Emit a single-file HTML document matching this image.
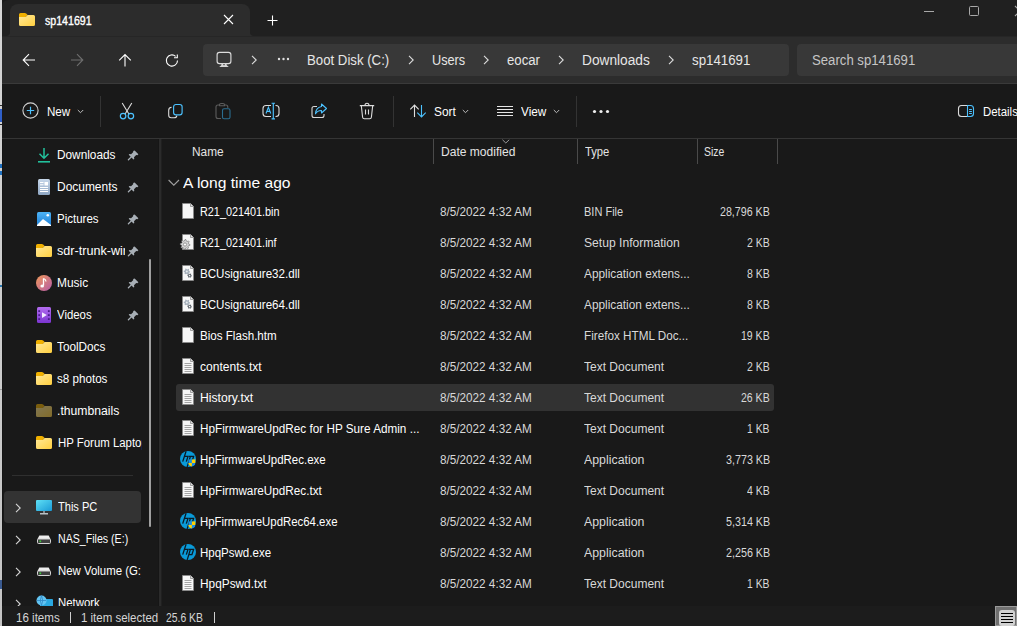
<!DOCTYPE html><html><head><meta charset="utf-8"><style>
html,body{margin:0;padding:0;width:1017px;height:626px;overflow:hidden;background:#191919}
body{position:relative;font-family:"Liberation Sans",sans-serif}
.t{position:absolute;white-space:pre;transform-origin:0 0}
svg{overflow:visible}
</style></head><body>
<div style="position:absolute;left:0;top:0;width:2px;height:626px;background:linear-gradient(#d6d6d6,#c4c4c4)"></div>
<div style="position:absolute;left:0px;top:105px;width:2px;height:1px;background:#303030;"></div>
<div style="position:absolute;left:0px;top:109px;width:2px;height:13px;background:#2f5fc8;"></div>
<div style="position:absolute;left:0px;top:124px;width:2px;height:1px;background:#202020;"></div>
<div style="position:absolute;left:0px;top:164px;width:2px;height:4px;background:#1e70c0;"></div>
<div style="position:absolute;left:0px;top:171px;width:2px;height:4px;background:#1e70c0;"></div>
<div style="position:absolute;left:0px;top:285px;width:2px;height:2px;background:#2a78b0;"></div>
<div style="position:absolute;left:0px;top:389px;width:2px;height:1px;background:#9a9a9a;"></div>
<div style="position:absolute;left:0px;top:580px;width:2px;height:9px;background:#3a5a90;"></div>
<div style="position:absolute;left:2px;top:0px;width:1015px;height:626px;background:#191919;"></div>
<div style="position:absolute;left:2px;top:139px;width:1px;height:467px;background:#141414;"></div>
<div style="position:absolute;left:2px;top:0px;width:1015px;height:36px;background:#202020;border-top-left-radius:6px"></div>
<div style="position:absolute;left:10px;top:4px;width:240px;height:32px;background:#2c2c2c;border-radius:8px 8px 0 0"></div>
<svg style="position:absolute;left:6px;top:32px" width="4" height="4" viewBox="0 0 4 4"><path d="M4 0 V4 H0 A4 4 0 0 0 4 0Z" fill="#2c2c2c"/></svg>
<svg style="position:absolute;left:250px;top:32px" width="4" height="4" viewBox="0 0 4 4"><path d="M0 0 V4 H4 A4 4 0 0 1 0 0Z" fill="#2c2c2c"/></svg>
<svg style="position:absolute;left:19px;top:13px" width="16" height="14" viewBox="0 0 16 14"><defs><linearGradient id="fg1" x1="0" y1="0" x2="1" y2="1"><stop offset="0" stop-color="#ffe99a"/><stop offset="1" stop-color="#ffcf3f"/></linearGradient></defs><path d="M0 1.5 Q0 0 1.5 0 H5.8 Q6.6 0 7.2 0.6 L8.6 2 L6.6 4 H0 Z" fill="#f0b000"/><path d="M0 4 H6.6 L8.6 2 H14.5 Q16 2 16 3.5 V11.5 Q16 13 14.5 13 H1.5 Q0 13 0 11.5 Z" fill="url(#fg1)"/></svg>
<div class="t" style="left:44.80px;top:15px;font-size:12px;line-height:12px;color:#ffffff;-webkit-text-stroke:0.35px #fff;transform:scaleX(0.8834)">sp141691</div>
<svg style="position:absolute;left:223px;top:14px" width="11" height="11" viewBox="0 0 11 11"><path d="M1 1 L10 10 M10 1 L1 10" stroke="#fff" stroke-width="1.1"/></svg>
<svg style="position:absolute;left:267px;top:15px" width="11" height="11" viewBox="0 0 11 11"><path d="M5.5 0.5 V10.5 M0.5 5.5 H10.5" stroke="#fff" stroke-width="1.1"/></svg>
<div style="position:absolute;left:924px;top:11px;width:10px;height:1px;background:#a8a8a8;"></div>
<div style="position:absolute;left:969px;top:6px;width:10px;height:10px;background:transparent;border:1px solid #a8a8a8;box-sizing:border-box;border-radius:1.5px"></div>
<svg style="position:absolute;left:1015px;top:6px" width="5" height="11" viewBox="0 0 5 11"><path d="M0 0 L10 10 M10 0 L0 10" stroke="#a8a8a8" stroke-width="1.1"/></svg>
<div style="position:absolute;left:2px;top:36px;width:1015px;height:47px;background:#2c2c2c;"></div>
<div style="position:absolute;left:2px;top:36px;width:1015px;height:1px;background:#262626;"></div>
<div style="position:absolute;left:2px;top:83px;width:1015px;height:1px;background:#3a3a3a;"></div>
<svg style="position:absolute;left:22px;top:53px" width="14" height="14" viewBox="0 0 14 14"><path d="M1.5 7 H13 M7 1.2 L1.2 7 L7 12.8" stroke="#fff" stroke-width="1.1" fill="none"/></svg>
<svg style="position:absolute;left:70px;top:53px" width="14" height="14" viewBox="0 0 14 14"><path d="M1 7 H12.5 M7 1.2 L12.8 7 L7 12.8" stroke="#6e6e6e" stroke-width="1.1" fill="none"/></svg>
<svg style="position:absolute;left:118px;top:53px" width="14" height="14" viewBox="0 0 14 14"><path d="M7 13.5 V1.5 M1.2 7.3 L7 1.5 L12.8 7.3" stroke="#fff" stroke-width="1.1" fill="none"/></svg>
<svg style="position:absolute;left:165px;top:53px" width="15" height="15" viewBox="0 0 15 15"><path d="M12.5 7.5 A5.6 5.6 0 1 1 10.6 3.3" stroke="#fff" stroke-width="1.1" fill="none"/><path d="M12.3 1.5 V4.8 H9" stroke="#fff" stroke-width="1.1" fill="none"/></svg>
<div style="position:absolute;left:203px;top:44px;width:586px;height:32px;background:#383838;border-radius:4px"></div>
<div style="position:absolute;left:797px;top:44px;width:220px;height:32px;background:#383838;border-radius:4px 0 0 4px"></div>
<svg style="position:absolute;left:216px;top:51px" width="16" height="17" viewBox="0 0 16 17"><rect x="1.1" y="1.3" width="13.8" height="11.3" rx="2.4" stroke="#dcdcdc" stroke-width="1.15" fill="none"/><path d="M5.6 12.6 H10.4 L10.8 14.2 L12.8 15.9 H3.2 L5.2 14.2 Z" fill="#d6d6d6"/><rect x="7.3" y="13" width="1.4" height="1.2" fill="#444"/></svg>
<svg style="position:absolute;left:251px;top:55px" width="7" height="10" viewBox="0 0 7 10"><path d="M1 0.8 L5.2 5 L1 9.2" stroke="#dcdcdc" stroke-width="1.1" fill="none"/></svg>
<svg style="position:absolute;left:277px;top:57px" width="13" height="4" viewBox="0 0 13 4"><circle cx="2" cy="2" r="1.2" fill="#e0e0e0"/><circle cx="6.5" cy="2" r="1.2" fill="#e0e0e0"/><circle cx="11" cy="2" r="1.2" fill="#e0e0e0"/></svg>
<div class="t" style="left:306.80px;top:53px;font-size:14px;line-height:14px;color:#e6e6e6;transform:scaleX(0.9435)">Boot Disk (C:)</div>
<svg style="position:absolute;left:408px;top:55px" width="7" height="10" viewBox="0 0 7 10"><path d="M1 0.8 L5.2 5 L1 9.2" stroke="#dcdcdc" stroke-width="1.1" fill="none"/></svg>
<div class="t" style="left:432.40px;top:53px;font-size:14px;line-height:14px;color:#e6e6e6;transform:scaleX(0.9068)">Users</div>
<svg style="position:absolute;left:483px;top:55px" width="7" height="10" viewBox="0 0 7 10"><path d="M1 0.8 L5.2 5 L1 9.2" stroke="#dcdcdc" stroke-width="1.1" fill="none"/></svg>
<div class="t" style="left:507.40px;top:53px;font-size:14px;line-height:14px;color:#e6e6e6;transform:scaleX(0.9429)">eocar</div>
<svg style="position:absolute;left:558px;top:55px" width="7" height="10" viewBox="0 0 7 10"><path d="M1 0.8 L5.2 5 L1 9.2" stroke="#dcdcdc" stroke-width="1.1" fill="none"/></svg>
<div class="t" style="left:581.80px;top:53px;font-size:14px;line-height:14px;color:#e6e6e6;transform:scaleX(0.9791)">Downloads</div>
<svg style="position:absolute;left:668px;top:55px" width="7" height="10" viewBox="0 0 7 10"><path d="M1 0.8 L5.2 5 L1 9.2" stroke="#dcdcdc" stroke-width="1.1" fill="none"/></svg>
<div class="t" style="left:691.70px;top:53px;font-size:14px;line-height:14px;color:#e6e6e6;transform:scaleX(0.9496)">sp141691</div>
<div class="t" style="left:811.80px;top:53px;font-size:14px;line-height:14px;color:#c5c5c5;transform:scaleX(0.9403)">Search sp141691</div>
<svg style="position:absolute;left:22px;top:102px" width="17" height="17" viewBox="0 0 17 17"><circle cx="8.5" cy="8.5" r="7.6" stroke="#d0d0d0" stroke-width="1.1" fill="none"/><path d="M8.5 4.8 V12.2 M4.8 8.5 H12.2" stroke="#4cc2ff" stroke-width="1.2"/></svg>
<div class="t" style="left:47.40px;top:106px;font-size:12px;line-height:12px;color:#ffffff;transform:scaleX(0.9658)">New</div>
<svg style="position:absolute;left:77px;top:109px" width="7" height="5" viewBox="0 0 7 5"><path d="M0.8 1 L3.5 3.7 L6.2 1" stroke="#bdbdbd" stroke-width="1" fill="none"/></svg>
<div style="position:absolute;left:100px;top:96px;width:1px;height:31px;background:#333333;"></div>
<svg style="position:absolute;left:119px;top:102px" width="16" height="18" viewBox="0 0 16 18"><path d="M3.2 1 L9.9 12 M12.8 1 L6.1 12" stroke="#dcdcdc" stroke-width="1.1" fill="none"/><circle cx="4.1" cy="14.1" r="2.75" stroke="#4cc2ff" stroke-width="1.2" fill="none"/><circle cx="11.9" cy="14.1" r="2.75" stroke="#4cc2ff" stroke-width="1.2" fill="none"/></svg>
<svg style="position:absolute;left:167px;top:103px" width="16" height="17" viewBox="0 0 16 17"><path d="M4.6 4.3 Q1.7 4.5 1.7 7.3 V12.3 Q1.7 14.8 4.2 14.8 H7.2 Q9.6 14.8 9.8 12.6" stroke="#dcdcdc" stroke-width="1.1" fill="none"/><rect x="6.6" y="1.5" width="8.5" height="10.4" rx="2.3" stroke="#4cc2ff" stroke-width="1.15" fill="none"/></svg>
<svg style="position:absolute;left:215px;top:102px" width="16" height="18" viewBox="0 0 16 18"><path d="M6 16.5 H3 Q1 16.5 1 14.5 V5 Q1 3 3 3 H4.5 M9.5 3 H10.8 Q12.8 3 12.8 5 V6" stroke="#5c5c5c" stroke-width="1.1" fill="none"/><path d="M4.5 3.8 V2.8 Q4.5 1.5 6 1.5 H8 Q9.5 1.5 9.5 2.8 V3.8 Z" stroke="#5c5c5c" stroke-width="1.1" fill="none"/><rect x="7.5" y="6.8" width="7.5" height="10" rx="1.6" stroke="#2b6d90" stroke-width="1.1" fill="none"/></svg>
<svg style="position:absolute;left:262px;top:102px" width="18" height="18" viewBox="0 0 18 18"><path d="M9 3.5 H4 Q1 3.5 1 6.5 V11.5 Q1 14.5 4 14.5 H9 M13.5 3.5 H14 Q17 3.5 17 6.5 V11.5 Q17 14.5 14 14.5 H13.5" stroke="#dcdcdc" stroke-width="1.1" fill="none"/><path d="M11.3 1.2 V16.8 M9.6 1.2 H13 M9.6 16.8 H13" stroke="#4cc2ff" stroke-width="1.15"/><path d="M4 11.5 L6.4 5.3 L8.8 11.5 M4.9 9.4 H7.9" stroke="#4cc2ff" stroke-width="1.1" fill="none"/></svg>
<svg style="position:absolute;left:311px;top:103px" width="17" height="16" viewBox="0 0 17 16"><path d="M6 3.5 H3 Q1 3.5 1 5.5 V12.5 Q1 14.5 3 14.5 H11 Q13 14.5 13 12.5 V11" stroke="#d8d8d8" stroke-width="1.1" fill="none"/><path d="M10.5 1 L15.5 5.5 L10.5 10 V7.5 Q6.5 7.3 4.5 10.8 Q4.8 4.5 10.5 3.5Z" stroke="#4cc2ff" stroke-width="1.1" fill="none" stroke-linejoin="round"/></svg>
<svg style="position:absolute;left:359px;top:102px" width="16" height="18" viewBox="0 0 16 18"><path d="M0.8 3.6 H15.2 M6 3.6 Q6 1.3 8 1.3 Q10 1.3 10 3.6 M2.3 3.6 L3.6 15.3 Q3.8 16.8 5.4 16.8 H10.6 Q12.2 16.8 12.4 15.3 L13.7 3.6 M6.5 7.5 V12.5 M9.5 7.5 V12.5" stroke="#dcdcdc" stroke-width="1.1" fill="none"/></svg>
<div style="position:absolute;left:393px;top:96px;width:1px;height:31px;background:#333333;"></div>
<svg style="position:absolute;left:409px;top:104px" width="18" height="14" viewBox="0 0 18 14"><path d="M5.5 13 V1 M1.3 5.3 L5.5 1 L9.7 5.3" stroke="#e0e0e0" stroke-width="1.1" fill="none"/><path d="M12.5 1 V13 M8.3 8.7 L12.5 13 L16.7 8.7" stroke="#4cc2ff" stroke-width="1.1" fill="none"/></svg>
<div class="t" style="left:434.00px;top:106px;font-size:12px;line-height:12px;color:#ffffff;transform:scaleX(0.9909)">Sort</div>
<svg style="position:absolute;left:462px;top:109px" width="7" height="5" viewBox="0 0 7 5"><path d="M0.8 1 L3.5 3.7 L6.2 1" stroke="#bdbdbd" stroke-width="1" fill="none"/></svg>
<svg style="position:absolute;left:497px;top:105px" width="16" height="12" viewBox="0 0 16 12"><path d="M0 1.5 H16 M0 4.5 H16 M0 7.5 H16 M0 10.5 H16" stroke="#e6e6e6" stroke-width="1.1"/></svg>
<div class="t" style="left:521.00px;top:106px;font-size:12px;line-height:12px;color:#ffffff;transform:scaleX(0.9816)">View</div>
<svg style="position:absolute;left:553px;top:109px" width="7" height="5" viewBox="0 0 7 5"><path d="M0.8 1 L3.5 3.7 L6.2 1" stroke="#bdbdbd" stroke-width="1" fill="none"/></svg>
<div style="position:absolute;left:576px;top:96px;width:1px;height:31px;background:#333333;"></div>
<svg style="position:absolute;left:592px;top:109px" width="18" height="5" viewBox="0 0 18 5"><circle cx="2.5" cy="2.5" r="1.6" fill="#f0f0f0"/><circle cx="9" cy="2.5" r="1.6" fill="#f0f0f0"/><circle cx="15.5" cy="2.5" r="1.6" fill="#f0f0f0"/></svg>
<svg style="position:absolute;left:958px;top:104px" width="17" height="14" viewBox="0 0 17 14"><path d="M9.5 1.5 H3.5 Q0.5 1.5 0.5 4.5 V9.5 Q0.5 12.5 3.5 12.5 H9.5" stroke="#dcdcdc" stroke-width="1.1" fill="none"/><path d="M9.5 1.5 H12.5 Q15.5 1.5 15.5 4.5 V9.5 Q15.5 12.5 12.5 12.5 H9.5 Z M11.5 5.5 H13.5 M11.5 7.5 H13.5 M11.5 9.5 H13.5" stroke="#4cc2ff" stroke-width="1.1" fill="none" stroke-linecap="round"/></svg>
<div class="t" style="left:982.60px;top:106px;font-size:12px;line-height:12px;color:#ffffff;transform:scaleX(0.9500)">Details</div>
<div style="position:absolute;left:2px;top:138px;width:1015px;height:1px;background:#353535;"></div>
<div style="position:absolute;left:158px;top:139px;width:1px;height:467px;background:#161616;"></div>
<div style="position:absolute;left:159px;top:139px;width:2px;height:467px;background:#2b2b2b;"></div>
<div style="position:absolute;left:161px;top:139px;width:1px;height:467px;background:#202020;"></div>
<div style="position:absolute;left:149px;top:259px;width:2px;height:268px;background:#a0a0a0;border-radius:1px"></div>
<svg style="position:absolute;left:127px;top:148px" width="12" height="12" viewBox="0 0 12 12"><path d="M7.6 2.4 L11.4 6.2 L10.4 7.2 L9.2 7 L7 9.2 L7.3 10.9 L6.5 11.6 L1.7 6.8 L2.4 6 L4.1 6.3 L6.3 4.1 L6.1 2.9 Z" fill="#a8afb6"/><path d="M4.6 8.6 L1.4 11.8" stroke="#a8afb6" stroke-width="1.3" stroke-linecap="round"/></svg>
<div class="t" style="left:57.40px;top:149px;font-size:12px;line-height:12px;color:#ffffff;transform:scaleX(0.9853)">Downloads</div>
<svg style="position:absolute;left:127px;top:180px" width="12" height="12" viewBox="0 0 12 12"><path d="M7.6 2.4 L11.4 6.2 L10.4 7.2 L9.2 7 L7 9.2 L7.3 10.9 L6.5 11.6 L1.7 6.8 L2.4 6 L4.1 6.3 L6.3 4.1 L6.1 2.9 Z" fill="#a8afb6"/><path d="M4.6 8.6 L1.4 11.8" stroke="#a8afb6" stroke-width="1.3" stroke-linecap="round"/></svg>
<div class="t" style="left:57.40px;top:181px;font-size:12px;line-height:12px;color:#ffffff;transform:scaleX(0.9959)">Documents</div>
<svg style="position:absolute;left:127px;top:212px" width="12" height="12" viewBox="0 0 12 12"><path d="M7.6 2.4 L11.4 6.2 L10.4 7.2 L9.2 7 L7 9.2 L7.3 10.9 L6.5 11.6 L1.7 6.8 L2.4 6 L4.1 6.3 L6.3 4.1 L6.1 2.9 Z" fill="#a8afb6"/><path d="M4.6 8.6 L1.4 11.8" stroke="#a8afb6" stroke-width="1.3" stroke-linecap="round"/></svg>
<div class="t" style="left:57.40px;top:213px;font-size:12px;line-height:12px;color:#ffffff;transform:scaleX(0.9591)">Pictures</div>
<svg style="position:absolute;left:127px;top:244px" width="12" height="12" viewBox="0 0 12 12"><path d="M7.6 2.4 L11.4 6.2 L10.4 7.2 L9.2 7 L7 9.2 L7.3 10.9 L6.5 11.6 L1.7 6.8 L2.4 6 L4.1 6.3 L6.3 4.1 L6.1 2.9 Z" fill="#a8afb6"/><path d="M4.6 8.6 L1.4 11.8" stroke="#a8afb6" stroke-width="1.3" stroke-linecap="round"/></svg>
<div style="position:absolute;left:0;top:241px;width:125px;height:20px;overflow:hidden"><div class="t" style="left:57.40px;top:4px;font-size:12px;line-height:12px;color:#ffffff;transform:scaleX(1.0500)">sdr-trunk-windows</div></div>
<svg style="position:absolute;left:127px;top:276px" width="12" height="12" viewBox="0 0 12 12"><path d="M7.6 2.4 L11.4 6.2 L10.4 7.2 L9.2 7 L7 9.2 L7.3 10.9 L6.5 11.6 L1.7 6.8 L2.4 6 L4.1 6.3 L6.3 4.1 L6.1 2.9 Z" fill="#a8afb6"/><path d="M4.6 8.6 L1.4 11.8" stroke="#a8afb6" stroke-width="1.3" stroke-linecap="round"/></svg>
<div class="t" style="left:57.40px;top:277px;font-size:12px;line-height:12px;color:#ffffff;transform:scaleX(0.9944)">Music</div>
<svg style="position:absolute;left:127px;top:308px" width="12" height="12" viewBox="0 0 12 12"><path d="M7.6 2.4 L11.4 6.2 L10.4 7.2 L9.2 7 L7 9.2 L7.3 10.9 L6.5 11.6 L1.7 6.8 L2.4 6 L4.1 6.3 L6.3 4.1 L6.1 2.9 Z" fill="#a8afb6"/><path d="M4.6 8.6 L1.4 11.8" stroke="#a8afb6" stroke-width="1.3" stroke-linecap="round"/></svg>
<div class="t" style="left:57.40px;top:309px;font-size:12px;line-height:12px;color:#ffffff;transform:scaleX(0.9479)">Videos</div>
<div class="t" style="left:57.40px;top:341px;font-size:12px;line-height:12px;color:#ffffff;transform:scaleX(0.9803)">ToolDocs</div>
<div class="t" style="left:57.40px;top:373px;font-size:12px;line-height:12px;color:#ffffff;transform:scaleX(0.9692)">s8 photos</div>
<div class="t" style="left:57.40px;top:405px;font-size:12px;line-height:12px;color:#ffffff;transform:scaleX(1.0167)">.thumbnails</div>
<div style="position:absolute;left:0;top:433px;width:141.5px;height:20px;overflow:hidden"><div class="t" style="left:57.60px;top:4px;font-size:12px;line-height:12px;color:#ffffff;transform:scaleX(0.9500)">HP Forum Laptop</div></div>
<svg style="position:absolute;left:37px;top:147px" width="14" height="16" viewBox="0 0 14 16"><path d="M7 1 V11 M2.5 6.8 L7 11.2 L11.5 6.8" stroke="#22c19c" stroke-width="1.5" fill="none"/><rect x="1" y="14" width="12" height="1.6" fill="#22c19c"/></svg>
<svg style="position:absolute;left:38px;top:179px" width="12" height="16" viewBox="0 0 12 16"><defs><linearGradient id="dg" x1="0" y1="0" x2="0" y2="1"><stop offset="0" stop-color="#c7d7ea"/><stop offset="1" stop-color="#8ea6c2"/></linearGradient></defs><rect x="0" y="0" width="12" height="16" rx="1.5" fill="url(#dg)"/><rect x="6.5" y="3" width="3.5" height="3.5" fill="#fff"/><path d="M2 3.5 H5.5 M2 5.8 H5.5 M2 8.5 H10 M2 10.5 H10 M2 12.5 H10" stroke="#fff" stroke-width="1"/></svg>
<svg style="position:absolute;left:37px;top:212px" width="14" height="14" viewBox="0 0 14 14"><defs><linearGradient id="pg" x1="0" y1="0" x2="0" y2="1"><stop offset="0" stop-color="#4db3f5"/><stop offset="1" stop-color="#1f7fd6"/></linearGradient></defs><rect x="0" y="0" width="14" height="14" rx="1.5" fill="url(#pg)"/><path d="M0 13 L6 7 L14 13 V14 H0Z" fill="#fff"/><circle cx="10.8" cy="3.3" r="1.3" fill="#fff"/></svg>
<svg style="position:absolute;left:36px;top:244px" width="16" height="14" viewBox="0 0 16 14"><defs><linearGradient id="fg2" x1="0" y1="0" x2="1" y2="1"><stop offset="0" stop-color="#ffe99a"/><stop offset="1" stop-color="#ffcf3f"/></linearGradient></defs><path d="M0 1.5 Q0 0 1.5 0 H5.8 Q6.6 0 7.2 0.6 L8.6 2 L6.6 4 H0 Z" fill="#f0b000"/><path d="M0 4 H6.6 L8.6 2 H14.5 Q16 2 16 3.5 V11.5 Q16 13 14.5 13 H1.5 Q0 13 0 11.5 Z" fill="url(#fg2)"/></svg>
<svg style="position:absolute;left:36px;top:275px" width="16" height="16" viewBox="0 0 16 16"><defs><linearGradient id="mg" x1="0" y1="0" x2="1" y2="1"><stop offset="0" stop-color="#f19a5a"/><stop offset="1" stop-color="#b45aa8"/></linearGradient></defs><circle cx="8" cy="8" r="8" fill="url(#mg)"/><path d="M7.5 3.5 V10.5" stroke="#fff" stroke-width="1.3"/><path d="M7.5 3.5 Q10 4.5 10 6.5" stroke="#fff" stroke-width="1.2" fill="none"/><ellipse cx="6.2" cy="11" rx="1.8" ry="1.5" fill="#fff"/></svg>
<svg style="position:absolute;left:37px;top:307px" width="14" height="16" viewBox="0 0 14 16"><defs><linearGradient id="vg" x1="0" y1="0" x2="0" y2="1"><stop offset="0" stop-color="#b36cf0"/><stop offset="1" stop-color="#7b35d0"/></linearGradient></defs><rect x="0" y="0" width="14" height="16" rx="1.5" fill="url(#vg)"/><g fill="#4a1d8a"><rect x="1.3" y="3.2" width="1.8" height="1.8"/><rect x="1.3" y="7.2" width="1.8" height="1.8"/><rect x="1.3" y="11.2" width="1.8" height="1.8"/><rect x="10.9" y="3.2" width="1.8" height="1.8"/><rect x="10.9" y="7.2" width="1.8" height="1.8"/><rect x="10.9" y="11.2" width="1.8" height="1.8"/></g><path d="M5 5.2 L9.8 8.1 L5 11Z" fill="#f4ecff"/></svg>
<svg style="position:absolute;left:36px;top:340px" width="16" height="14" viewBox="0 0 16 14"><defs><linearGradient id="fg3" x1="0" y1="0" x2="1" y2="1"><stop offset="0" stop-color="#ffe99a"/><stop offset="1" stop-color="#ffcf3f"/></linearGradient></defs><path d="M0 1.5 Q0 0 1.5 0 H5.8 Q6.6 0 7.2 0.6 L8.6 2 L6.6 4 H0 Z" fill="#f0b000"/><path d="M0 4 H6.6 L8.6 2 H14.5 Q16 2 16 3.5 V11.5 Q16 13 14.5 13 H1.5 Q0 13 0 11.5 Z" fill="url(#fg3)"/></svg>
<svg style="position:absolute;left:36px;top:372px" width="16" height="14" viewBox="0 0 16 14"><defs><linearGradient id="fg4" x1="0" y1="0" x2="1" y2="1"><stop offset="0" stop-color="#ffe99a"/><stop offset="1" stop-color="#ffcf3f"/></linearGradient></defs><path d="M0 1.5 Q0 0 1.5 0 H5.8 Q6.6 0 7.2 0.6 L8.6 2 L6.6 4 H0 Z" fill="#f0b000"/><path d="M0 4 H6.6 L8.6 2 H14.5 Q16 2 16 3.5 V11.5 Q16 13 14.5 13 H1.5 Q0 13 0 11.5 Z" fill="url(#fg4)"/></svg>
<svg style="position:absolute;left:36px;top:404px" width="16" height="14" viewBox="0 0 16 14"><g opacity="0.45"><defs><linearGradient id="fg5" x1="0" y1="0" x2="1" y2="1"><stop offset="0" stop-color="#ffe99a"/><stop offset="1" stop-color="#ffcf3f"/></linearGradient></defs><path d="M0 1.5 Q0 0 1.5 0 H5.8 Q6.6 0 7.2 0.6 L8.6 2 L6.6 4 H0 Z" fill="#f0b000"/><path d="M0 4 H6.6 L8.6 2 H14.5 Q16 2 16 3.5 V11.5 Q16 13 14.5 13 H1.5 Q0 13 0 11.5 Z" fill="url(#fg5)"/></g></svg>
<svg style="position:absolute;left:36px;top:436px" width="16" height="14" viewBox="0 0 16 14"><defs><linearGradient id="fg6" x1="0" y1="0" x2="1" y2="1"><stop offset="0" stop-color="#ffe99a"/><stop offset="1" stop-color="#ffcf3f"/></linearGradient></defs><path d="M0 1.5 Q0 0 1.5 0 H5.8 Q6.6 0 7.2 0.6 L8.6 2 L6.6 4 H0 Z" fill="#f0b000"/><path d="M0 4 H6.6 L8.6 2 H14.5 Q16 2 16 3.5 V11.5 Q16 13 14.5 13 H1.5 Q0 13 0 11.5 Z" fill="url(#fg6)"/></svg>
<div style="position:absolute;left:12px;top:475px;width:121px;height:1px;background:#2f2f2f;"></div>
<div style="position:absolute;left:4px;top:491px;width:137px;height:32px;background:#333333;border-radius:4px"></div>
<svg style="position:absolute;left:15px;top:503px" width="7" height="10" viewBox="0 0 7 10"><path d="M1 0.8 L5.2 5 L1 9.2" stroke="#d6d6d6" stroke-width="1.1" fill="none"/></svg>
<svg style="position:absolute;left:15px;top:535px" width="7" height="10" viewBox="0 0 7 10"><path d="M1 0.8 L5.2 5 L1 9.2" stroke="#d6d6d6" stroke-width="1.1" fill="none"/></svg>
<svg style="position:absolute;left:15px;top:567px" width="7" height="10" viewBox="0 0 7 10"><path d="M1 0.8 L5.2 5 L1 9.2" stroke="#d6d6d6" stroke-width="1.1" fill="none"/></svg>
<svg style="position:absolute;left:15px;top:599px" width="7" height="10" viewBox="0 0 7 10"><path d="M1 0.8 L5.2 5 L1 9.2" stroke="#d6d6d6" stroke-width="1.1" fill="none"/></svg>
<svg style="position:absolute;left:36px;top:500px" width="16" height="15" viewBox="0 0 16 15"><defs><linearGradient id="tg" x1="0" y1="0" x2="1" y2="1"><stop offset="0" stop-color="#5fe0f5"/><stop offset="1" stop-color="#1a9ad6"/></linearGradient></defs><rect x="0" y="0" width="16" height="11" rx="1" fill="url(#tg)"/><rect x="7.2" y="11" width="1.6" height="2" fill="#9aa4aa"/><rect x="4" y="13" width="8" height="1.5" fill="#b8c0c5"/></svg>
<div class="t" style="left:57.60px;top:501px;font-size:12px;line-height:12px;color:#ffffff;transform:scaleX(0.9196)">This PC</div>
<svg style="position:absolute;left:37px;top:535px" width="14" height="9" viewBox="0 0 14 9"><path d="M2.3 0.5 H11.7 L13.6 4.2 H0.4 Z" fill="#ececec"/><rect x="0.5" y="4" width="13" height="4.5" rx="1" fill="#404040" stroke="#d4d4d4" stroke-width="1"/><rect x="2.5" y="5.5" width="1.6" height="1.6" fill="#3ad13a"/></svg>
<div class="t" style="left:57.60px;top:533px;font-size:12px;line-height:12px;color:#ffffff;transform:scaleX(0.8844)">NAS_Files (E:)</div>
<svg style="position:absolute;left:37px;top:567px" width="14" height="9" viewBox="0 0 14 9"><path d="M2.3 0.5 H11.7 L13.6 4.2 H0.4 Z" fill="#ececec"/><rect x="0.5" y="4" width="13" height="4.5" rx="1" fill="#404040" stroke="#d4d4d4" stroke-width="1"/><rect x="2.5" y="5.5" width="1.6" height="1.6" fill="#3ad13a"/></svg>
<div style="position:absolute;left:0;top:561px;width:141px;height:20px;overflow:hidden"><div class="t" style="left:57.60px;top:4px;font-size:12px;line-height:12px;color:#ffffff;transform:scaleX(0.9500)">New Volume (G:)</div></div>
<svg style="position:absolute;left:36px;top:595px" width="17" height="14" viewBox="0 0 17 14"><rect x="4" y="4" width="13" height="9" rx="1" fill="#2aa8e0"/><circle cx="5.5" cy="5.5" r="5" fill="#62c4f2"/><path d="M1 5.5 H10 M5.5 0.5 Q3 5.5 5.5 10.5 M5.5 0.5 Q8 5.5 5.5 10.5" stroke="#2a7fc0" stroke-width="0.7" fill="none"/></svg>
<div class="t" style="left:57.60px;top:597px;font-size:12px;line-height:12px;color:#ffffff;transform:scaleX(0.9500)">Network</div>
<div class="t" style="left:192.40px;top:146px;font-size:12px;line-height:12px;color:#e4e4e4;transform:scaleX(0.9875)">Name</div>
<div class="t" style="left:440.50px;top:146px;font-size:12px;line-height:12px;color:#e4e4e4;transform:scaleX(1.0041)">Date modified</div>
<div class="t" style="left:584.70px;top:146px;font-size:12px;line-height:12px;color:#e4e4e4;transform:scaleX(0.9346)">Type</div>
<div class="t" style="left:704.00px;top:146px;font-size:12px;line-height:12px;color:#e4e4e4;transform:scaleX(0.8684)">Size</div>
<div style="position:absolute;left:433px;top:139px;width:1px;height:25px;background:#4a4a4a;"></div>
<div style="position:absolute;left:577px;top:139px;width:1px;height:25px;background:#4a4a4a;"></div>
<div style="position:absolute;left:697px;top:139px;width:1px;height:25px;background:#4a4a4a;"></div>
<div style="position:absolute;left:777px;top:139px;width:1px;height:25px;background:#4a4a4a;"></div>
<svg style="position:absolute;left:502px;top:139px" width="8" height="5" viewBox="0 0 8 5"><path d="M0.5 0.8 L3.8 4 L7.2 0.8" stroke="#9a9a9a" stroke-width="1" fill="none"/></svg>
<svg style="position:absolute;left:168px;top:179px" width="12" height="8" viewBox="0 0 12 8"><path d="M0.6 1 L5.8 6.2 L11 1" stroke="#a0a0a0" stroke-width="1.1" fill="none"/></svg>
<div class="t" style="left:183.20px;top:175px;font-size:15px;line-height:15px;color:#ffffff;transform:scaleX(1.0399)">A long time ago</div>
<div style="position:absolute;left:176px;top:384px;width:598px;height:27px;background:#323232;border-radius:3px"></div>
<svg style="position:absolute;left:182px;top:203px" width="12" height="16" viewBox="0 0 12 16"><path d="M0.5 0.5 H8.5 L11.5 3.5 V15.5 H0.5Z" fill="#f7f7f7" stroke="#8a8a8a" stroke-width="0.8"/><path d="M8.5 0.5 V3.5 H11.5" fill="#e0e0e0" stroke="#8a8a8a" stroke-width="0.8"/></svg>
<div class="t" style="left:200.20px;top:206px;font-size:12px;line-height:12px;color:#ffffff;transform:scaleX(0.9033)">R21_021401.bin</div>
<div class="t" style="left:439.90px;top:206px;font-size:12px;line-height:12px;color:#d8d8d8;transform:scaleX(0.9764)">8/5/2022 4:32 AM</div>
<div class="t" style="left:584.30px;top:206px;font-size:12px;line-height:12px;color:#d8d8d8;transform:scaleX(0.9173)">BIN File</div>
<div class="t" style="left:720.10px;top:206px;font-size:12px;line-height:12px;color:#d8d8d8;transform:scaleX(0.8893)">28,796 KB</div>
<svg style="position:absolute;left:179px;top:233px" width="16" height="17" viewBox="0 0 16 17"><g transform="translate(3,1)"><path d="M0.5 0.5 H8.5 L11.5 3.5 V15.5 H0.5Z" fill="#f7f7f7" stroke="#8a8a8a" stroke-width="0.8"/><path d="M8.5 0.5 V3.5 H11.5" fill="#e0e0e0" stroke="#8a8a8a" stroke-width="0.8"/></g><g stroke="#555" stroke-width="0.5"><path d="M11.00 11.50 L10.90 12.48 L9.33 12.88 L8.99 13.50 L9.54 15.04 L8.78 15.66 L7.38 14.83 L6.70 15.03 L6.00 16.50 L5.02 16.40 L4.62 14.83 L4.00 14.49 L2.46 15.04 L1.84 14.28 L2.67 12.88 L2.47 12.20 L1.00 11.50 L1.10 10.52 L2.67 10.12 L3.01 9.50 L2.46 7.96 L3.22 7.34 L4.62 8.17 L5.30 7.97 L6.00 6.50 L6.98 6.60 L7.38 8.17 L8.00 8.51 L9.54 7.96 L10.16 8.72 L9.33 10.12 L9.53 10.80Z" fill="#d4d4d4"/><circle cx="6" cy="11.5" r="1.6" fill="#fafafa"/></g></svg>
<div class="t" style="left:200.20px;top:237px;font-size:12px;line-height:12px;color:#ffffff;transform:scaleX(0.9038)">R21_021401.inf</div>
<div class="t" style="left:439.90px;top:237px;font-size:12px;line-height:12px;color:#d8d8d8;transform:scaleX(0.9764)">8/5/2022 4:32 AM</div>
<div class="t" style="left:584.30px;top:237px;font-size:12px;line-height:12px;color:#d8d8d8;transform:scaleX(1.0111)">Setup Information</div>
<div class="t" style="left:747.10px;top:237px;font-size:12px;line-height:12px;color:#d8d8d8;transform:scaleX(0.8769)">2 KB</div>
<svg style="position:absolute;left:182px;top:265px" width="12" height="16" viewBox="0 0 12 16"><path d="M0.5 0.5 H8.5 L11.5 3.5 V15.5 H0.5Z" fill="#f7f7f7" stroke="#8a8a8a" stroke-width="0.8"/><path d="M8.5 0.5 V3.5 H11.5" fill="#e0e0e0" stroke="#8a8a8a" stroke-width="0.8"/><path d="M8.00 6.60 L7.89 7.43 L6.79 7.75 L6.43 8.23 L6.40 9.37 L5.63 9.69 L4.80 8.90 L4.20 8.82 L3.20 9.37 L2.54 8.86 L2.81 7.75 L2.58 7.20 L1.60 6.60 L1.71 5.77 L2.81 5.45 L3.17 4.97 L3.20 3.83 L3.97 3.51 L4.80 4.30 L5.40 4.38 L6.40 3.83 L7.06 4.34 L6.79 5.45 L7.02 6.00Z" fill="#a7b1bc"/><circle cx="4.8" cy="6.6" r="1.0" fill="#e8ecef"/><path d="M9.90 10.60 L9.82 11.20 L8.99 11.40 L8.73 11.73 L8.75 12.59 L8.20 12.82 L7.60 12.20 L7.19 12.15 L6.45 12.59 L5.97 12.23 L6.21 11.40 L6.05 11.01 L5.30 10.60 L5.38 10.00 L6.21 9.80 L6.47 9.47 L6.45 8.61 L7.00 8.38 L7.60 9.00 L8.01 9.05 L8.75 8.61 L9.23 8.97 L8.99 9.80 L9.15 10.19Z" fill="#5c636b"/><circle cx="7.6" cy="10.6" r="0.8" fill="#f4f4f4"/></svg>
<div class="t" style="left:200.20px;top:268px;font-size:12px;line-height:12px;color:#ffffff;transform:scaleX(0.9654)">BCUsignature32.dll</div>
<div class="t" style="left:439.90px;top:268px;font-size:12px;line-height:12px;color:#d8d8d8;transform:scaleX(0.9764)">8/5/2022 4:32 AM</div>
<div class="t" style="left:584.30px;top:268px;font-size:12px;line-height:12px;color:#d8d8d8;transform:scaleX(0.9853)">Application extens...</div>
<div class="t" style="left:747.10px;top:268px;font-size:12px;line-height:12px;color:#d8d8d8;transform:scaleX(0.8769)">8 KB</div>
<svg style="position:absolute;left:182px;top:296px" width="12" height="16" viewBox="0 0 12 16"><path d="M0.5 0.5 H8.5 L11.5 3.5 V15.5 H0.5Z" fill="#f7f7f7" stroke="#8a8a8a" stroke-width="0.8"/><path d="M8.5 0.5 V3.5 H11.5" fill="#e0e0e0" stroke="#8a8a8a" stroke-width="0.8"/><path d="M8.00 6.60 L7.89 7.43 L6.79 7.75 L6.43 8.23 L6.40 9.37 L5.63 9.69 L4.80 8.90 L4.20 8.82 L3.20 9.37 L2.54 8.86 L2.81 7.75 L2.58 7.20 L1.60 6.60 L1.71 5.77 L2.81 5.45 L3.17 4.97 L3.20 3.83 L3.97 3.51 L4.80 4.30 L5.40 4.38 L6.40 3.83 L7.06 4.34 L6.79 5.45 L7.02 6.00Z" fill="#a7b1bc"/><circle cx="4.8" cy="6.6" r="1.0" fill="#e8ecef"/><path d="M9.90 10.60 L9.82 11.20 L8.99 11.40 L8.73 11.73 L8.75 12.59 L8.20 12.82 L7.60 12.20 L7.19 12.15 L6.45 12.59 L5.97 12.23 L6.21 11.40 L6.05 11.01 L5.30 10.60 L5.38 10.00 L6.21 9.80 L6.47 9.47 L6.45 8.61 L7.00 8.38 L7.60 9.00 L8.01 9.05 L8.75 8.61 L9.23 8.97 L8.99 9.80 L9.15 10.19Z" fill="#5c636b"/><circle cx="7.6" cy="10.6" r="0.8" fill="#f4f4f4"/></svg>
<div class="t" style="left:200.20px;top:299px;font-size:12px;line-height:12px;color:#ffffff;transform:scaleX(0.9654)">BCUsignature64.dll</div>
<div class="t" style="left:439.90px;top:299px;font-size:12px;line-height:12px;color:#d8d8d8;transform:scaleX(0.9764)">8/5/2022 4:32 AM</div>
<div class="t" style="left:584.30px;top:299px;font-size:12px;line-height:12px;color:#d8d8d8;transform:scaleX(0.9853)">Application extens...</div>
<div class="t" style="left:747.10px;top:299px;font-size:12px;line-height:12px;color:#d8d8d8;transform:scaleX(0.8769)">8 KB</div>
<svg style="position:absolute;left:182px;top:327px" width="12" height="16" viewBox="0 0 12 16"><path d="M0.5 0.5 H8.5 L11.5 3.5 V15.5 H0.5Z" fill="#f7f7f7" stroke="#8a8a8a" stroke-width="0.8"/><path d="M8.5 0.5 V3.5 H11.5" fill="#e0e0e0" stroke="#8a8a8a" stroke-width="0.8"/></svg>
<div class="t" style="left:200.20px;top:330px;font-size:12px;line-height:12px;color:#ffffff;transform:scaleX(0.9663)">Bios Flash.htm</div>
<div class="t" style="left:439.90px;top:330px;font-size:12px;line-height:12px;color:#d8d8d8;transform:scaleX(0.9764)">8/5/2022 4:32 AM</div>
<div class="t" style="left:584.30px;top:330px;font-size:12px;line-height:12px;color:#d8d8d8;transform:scaleX(0.9759)">Firefox HTML Doc...</div>
<div class="t" style="left:741.20px;top:330px;font-size:12px;line-height:12px;color:#d8d8d8;transform:scaleX(0.8763)">19 KB</div>
<svg style="position:absolute;left:182px;top:358px" width="12" height="16" viewBox="0 0 12 16"><path d="M0.5 0.5 H8.5 L11.5 3.5 V15.5 H0.5Z" fill="#f7f7f7" stroke="#8a8a8a" stroke-width="0.8"/><path d="M8.5 0.5 V3.5 H11.5" fill="#e0e0e0" stroke="#8a8a8a" stroke-width="0.8"/><path d="M2.5 5.5 H9.5 M2.5 7.5 H9.5 M2.5 9.5 H9.5 M2.5 11.5 H9.5 M2.5 13.5 H9.5" stroke="#9a9a9a" stroke-width="0.9"/></svg>
<div class="t" style="left:200.20px;top:361px;font-size:12px;line-height:12px;color:#ffffff;transform:scaleX(1.0037)">contents.txt</div>
<div class="t" style="left:439.90px;top:361px;font-size:12px;line-height:12px;color:#d8d8d8;transform:scaleX(0.9764)">8/5/2022 4:32 AM</div>
<div class="t" style="left:584.30px;top:361px;font-size:12px;line-height:12px;color:#d8d8d8;transform:scaleX(1.0012)">Text Document</div>
<div class="t" style="left:747.10px;top:361px;font-size:12px;line-height:12px;color:#d8d8d8;transform:scaleX(0.8769)">2 KB</div>
<svg style="position:absolute;left:182px;top:389px" width="12" height="16" viewBox="0 0 12 16"><path d="M0.5 0.5 H8.5 L11.5 3.5 V15.5 H0.5Z" fill="#f7f7f7" stroke="#8a8a8a" stroke-width="0.8"/><path d="M8.5 0.5 V3.5 H11.5" fill="#e0e0e0" stroke="#8a8a8a" stroke-width="0.8"/><path d="M2.5 5.5 H9.5 M2.5 7.5 H9.5 M2.5 9.5 H9.5 M2.5 11.5 H9.5 M2.5 13.5 H9.5" stroke="#9a9a9a" stroke-width="0.9"/></svg>
<div class="t" style="left:200.20px;top:392px;font-size:12px;line-height:12px;color:#ffffff;transform:scaleX(1.0152)">History.txt</div>
<div class="t" style="left:439.90px;top:392px;font-size:12px;line-height:12px;color:#d8d8d8;transform:scaleX(0.9764)">8/5/2022 4:32 AM</div>
<div class="t" style="left:584.30px;top:392px;font-size:12px;line-height:12px;color:#d8d8d8;transform:scaleX(1.0012)">Text Document</div>
<div class="t" style="left:741.20px;top:392px;font-size:12px;line-height:12px;color:#d8d8d8;transform:scaleX(0.8763)">26 KB</div>
<svg style="position:absolute;left:182px;top:420px" width="12" height="16" viewBox="0 0 12 16"><path d="M0.5 0.5 H8.5 L11.5 3.5 V15.5 H0.5Z" fill="#f7f7f7" stroke="#8a8a8a" stroke-width="0.8"/><path d="M8.5 0.5 V3.5 H11.5" fill="#e0e0e0" stroke="#8a8a8a" stroke-width="0.8"/><path d="M2.5 5.5 H9.5 M2.5 7.5 H9.5 M2.5 9.5 H9.5 M2.5 11.5 H9.5 M2.5 13.5 H9.5" stroke="#9a9a9a" stroke-width="0.9"/></svg>
<div class="t" style="left:200.20px;top:423px;font-size:12px;line-height:12px;color:#ffffff;transform:scaleX(0.9773)">HpFirmwareUpdRec for HP Sure Admin ...</div>
<div class="t" style="left:439.90px;top:423px;font-size:12px;line-height:12px;color:#d8d8d8;transform:scaleX(0.9764)">8/5/2022 4:32 AM</div>
<div class="t" style="left:584.30px;top:423px;font-size:12px;line-height:12px;color:#d8d8d8;transform:scaleX(1.0012)">Text Document</div>
<div class="t" style="left:747.40px;top:423px;font-size:12px;line-height:12px;color:#d8d8d8;transform:scaleX(0.8654)">1 KB</div>
<svg style="position:absolute;left:180px;top:451px" width="16" height="16" viewBox="0 0 16 16"><circle cx="8" cy="8" r="8" fill="#0a9ad8"/><path d="M6.1 0.3 L2.7 10.6 M4.4 5.4 H8 L6.3 10.6 M8.9 5.4 H13.6 L11.9 10.6 H8.4 M10.4 5.4 L7.2 15.9" stroke="#0b1a24" stroke-width="1.3" fill="none" stroke-linejoin="miter"/><path d="M8.5 8.2 Q12 8.6 15.3 8.2 V12.2 Q15.3 14.7 12 15.5 Q8.5 14.7 8.5 12.2Z" fill="#1b8fe6"/><path d="M11.9 8.4 Q13.6 8.5 15.3 8.2 V11.9 H11.9Z" fill="#ffd200"/><path d="M8.5 11.9 H11.9 V15.4 Q8.5 14.6 8.5 12.2Z" fill="#ffd200"/></svg>
<div class="t" style="left:200.20px;top:454px;font-size:12px;line-height:12px;color:#ffffff;transform:scaleX(0.9568)">HpFirmwareUpdRec.exe</div>
<div class="t" style="left:439.90px;top:454px;font-size:12px;line-height:12px;color:#d8d8d8;transform:scaleX(0.9764)">8/5/2022 4:32 AM</div>
<div class="t" style="left:584.30px;top:454px;font-size:12px;line-height:12px;color:#d8d8d8;transform:scaleX(1.0298)">Application</div>
<div class="t" style="left:725.70px;top:454px;font-size:12px;line-height:12px;color:#d8d8d8;transform:scaleX(0.8952)">3,773 KB</div>
<svg style="position:absolute;left:182px;top:482px" width="12" height="16" viewBox="0 0 12 16"><path d="M0.5 0.5 H8.5 L11.5 3.5 V15.5 H0.5Z" fill="#f7f7f7" stroke="#8a8a8a" stroke-width="0.8"/><path d="M8.5 0.5 V3.5 H11.5" fill="#e0e0e0" stroke="#8a8a8a" stroke-width="0.8"/><path d="M2.5 5.5 H9.5 M2.5 7.5 H9.5 M2.5 9.5 H9.5 M2.5 11.5 H9.5 M2.5 13.5 H9.5" stroke="#9a9a9a" stroke-width="0.9"/></svg>
<div class="t" style="left:200.20px;top:485px;font-size:12px;line-height:12px;color:#ffffff;transform:scaleX(0.9764)">HpFirmwareUpdRec.txt</div>
<div class="t" style="left:439.90px;top:485px;font-size:12px;line-height:12px;color:#d8d8d8;transform:scaleX(0.9764)">8/5/2022 4:32 AM</div>
<div class="t" style="left:584.30px;top:485px;font-size:12px;line-height:12px;color:#d8d8d8;transform:scaleX(1.0012)">Text Document</div>
<div class="t" style="left:747.10px;top:485px;font-size:12px;line-height:12px;color:#d8d8d8;transform:scaleX(0.8769)">4 KB</div>
<svg style="position:absolute;left:180px;top:513px" width="16" height="16" viewBox="0 0 16 16"><circle cx="8" cy="8" r="8" fill="#0a9ad8"/><path d="M6.1 0.3 L2.7 10.6 M4.4 5.4 H8 L6.3 10.6 M8.9 5.4 H13.6 L11.9 10.6 H8.4 M10.4 5.4 L7.2 15.9" stroke="#0b1a24" stroke-width="1.3" fill="none" stroke-linejoin="miter"/><path d="M8.5 8.2 Q12 8.6 15.3 8.2 V12.2 Q15.3 14.7 12 15.5 Q8.5 14.7 8.5 12.2Z" fill="#1b8fe6"/><path d="M11.9 8.4 Q13.6 8.5 15.3 8.2 V11.9 H11.9Z" fill="#ffd200"/><path d="M8.5 11.9 H11.9 V15.4 Q8.5 14.6 8.5 12.2Z" fill="#ffd200"/></svg>
<div class="t" style="left:200.20px;top:516px;font-size:12px;line-height:12px;color:#ffffff;transform:scaleX(0.9499)">HpFirmwareUpdRec64.exe</div>
<div class="t" style="left:439.90px;top:516px;font-size:12px;line-height:12px;color:#d8d8d8;transform:scaleX(0.9764)">8/5/2022 4:32 AM</div>
<div class="t" style="left:584.30px;top:516px;font-size:12px;line-height:12px;color:#d8d8d8;transform:scaleX(1.0298)">Application</div>
<div class="t" style="left:725.70px;top:516px;font-size:12px;line-height:12px;color:#d8d8d8;transform:scaleX(0.8952)">5,314 KB</div>
<svg style="position:absolute;left:180px;top:544px" width="16" height="16" viewBox="0 0 16 16"><circle cx="8" cy="8" r="8" fill="#0a9ad8"/><path d="M6.1 0.3 L2.7 10.6 M4.4 5.4 H8 L6.3 10.6 M8.9 5.4 H13.6 L11.9 10.6 H8.4 M10.4 5.4 L7.2 15.9" stroke="#0b1a24" stroke-width="1.3" fill="none" stroke-linejoin="miter"/></svg>
<div class="t" style="left:200.20px;top:547px;font-size:12px;line-height:12px;color:#ffffff;transform:scaleX(0.9595)">HpqPswd.exe</div>
<div class="t" style="left:439.90px;top:547px;font-size:12px;line-height:12px;color:#d8d8d8;transform:scaleX(0.9764)">8/5/2022 4:32 AM</div>
<div class="t" style="left:584.30px;top:547px;font-size:12px;line-height:12px;color:#d8d8d8;transform:scaleX(1.0298)">Application</div>
<div class="t" style="left:725.70px;top:547px;font-size:12px;line-height:12px;color:#d8d8d8;transform:scaleX(0.8952)">2,256 KB</div>
<svg style="position:absolute;left:182px;top:575px" width="12" height="16" viewBox="0 0 12 16"><path d="M0.5 0.5 H8.5 L11.5 3.5 V15.5 H0.5Z" fill="#f7f7f7" stroke="#8a8a8a" stroke-width="0.8"/><path d="M8.5 0.5 V3.5 H11.5" fill="#e0e0e0" stroke="#8a8a8a" stroke-width="0.8"/><path d="M2.5 5.5 H9.5 M2.5 7.5 H9.5 M2.5 9.5 H9.5 M2.5 11.5 H9.5 M2.5 13.5 H9.5" stroke="#9a9a9a" stroke-width="0.9"/></svg>
<div class="t" style="left:200.20px;top:578px;font-size:12px;line-height:12px;color:#ffffff;transform:scaleX(0.9870)">HpqPswd.txt</div>
<div class="t" style="left:439.90px;top:578px;font-size:12px;line-height:12px;color:#d8d8d8;transform:scaleX(0.9764)">8/5/2022 4:32 AM</div>
<div class="t" style="left:584.30px;top:578px;font-size:12px;line-height:12px;color:#d8d8d8;transform:scaleX(1.0012)">Text Document</div>
<div class="t" style="left:747.40px;top:578px;font-size:12px;line-height:12px;color:#d8d8d8;transform:scaleX(0.8654)">1 KB</div>
<div style="position:absolute;left:2px;top:606px;width:1015px;height:20px;background:#1c1c1c;"></div>
<div class="t" style="left:15.50px;top:612px;font-size:12px;line-height:12px;color:#d6d6d6;transform:scaleX(0.9631)">16 items</div>
<div style="position:absolute;left:70px;top:612px;width:1px;height:11px;background:#cfcfcf;"></div>
<div class="t" style="left:81.40px;top:612px;font-size:12px;line-height:12px;color:#d6d6d6;transform:scaleX(0.9560)">1 item selected</div>
<div class="t" style="left:166.40px;top:612px;font-size:12px;line-height:12px;color:#d6d6d6;transform:scaleX(0.8655)">25.6 KB</div>
<div style="position:absolute;left:214px;top:612px;width:1px;height:11px;background:#cfcfcf;"></div>
<div style="position:absolute;left:995px;top:606px;width:22px;height:20px;background:#707070;border:1px solid #9a9a9a;box-sizing:border-box"></div>
<div style="position:absolute;left:999px;top:610px;width:16px;height:16px;background:#d2d2d2;border-radius:3px"></div>
<div style="position:absolute;left:1001px;top:613px;width:12px;height:1px;background:#000;"></div>
<div style="position:absolute;left:1001px;top:616px;width:12px;height:1px;background:#000;"></div>
<div style="position:absolute;left:1001px;top:619px;width:12px;height:1px;background:#000;"></div>
<div style="position:absolute;left:1001px;top:622px;width:12px;height:1px;background:#000;"></div>
</body></html>
